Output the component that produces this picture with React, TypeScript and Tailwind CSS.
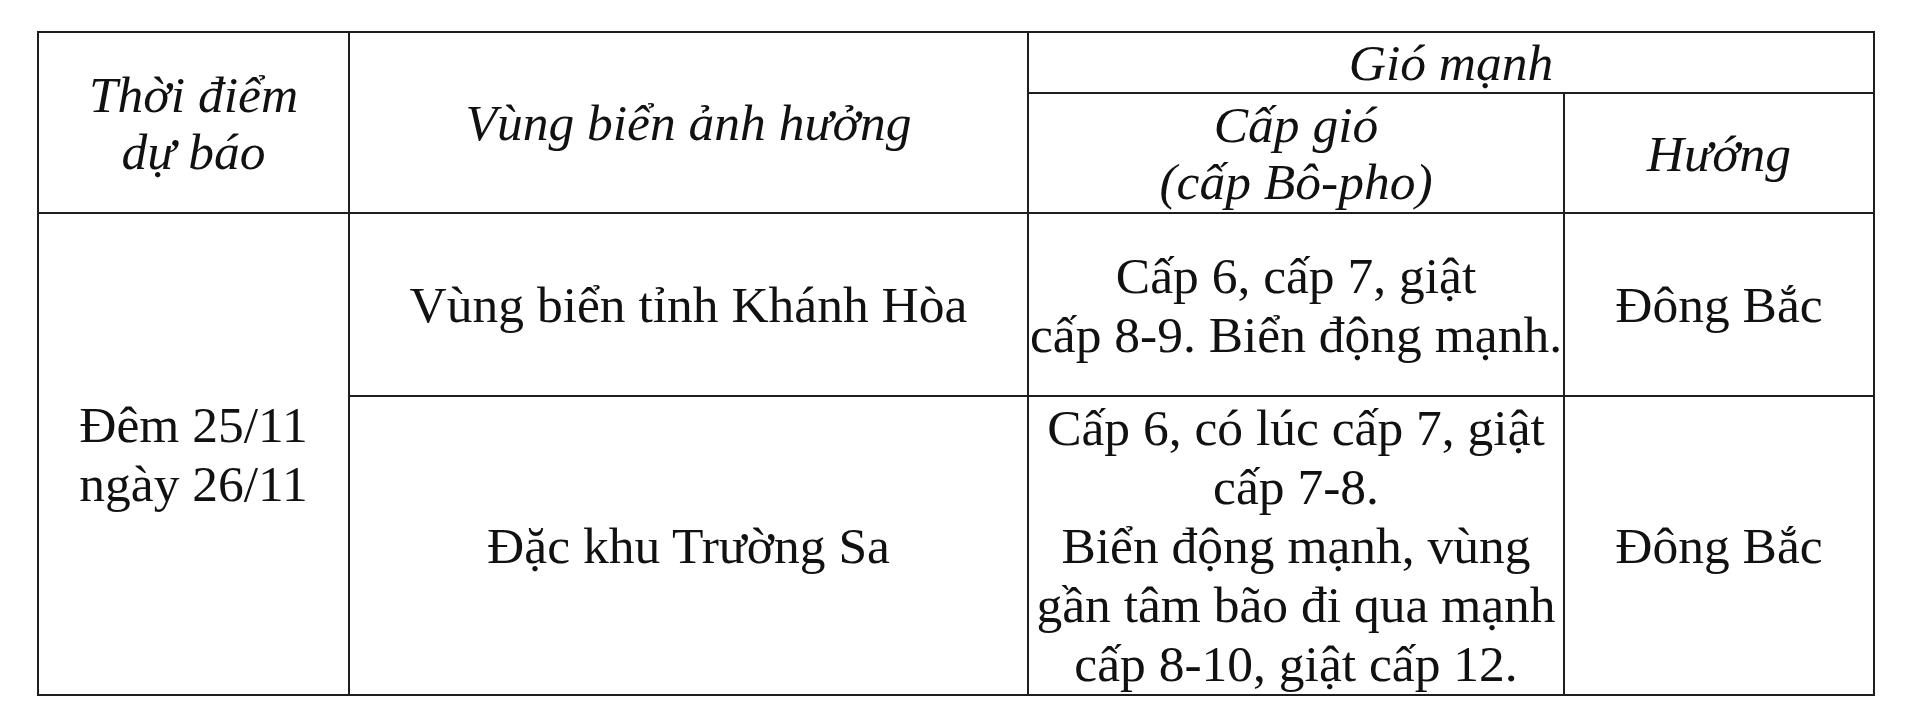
export default function App() {
  const cell =
    "flex items-center justify-center text-center border-r-2 border-b-2 border-[#1e1e1e] overflow-hidden";
  const head = `${cell} italic leading-[57px]`;
  const body = `${cell} leading-[59px]`;

  return (
    <div className="h-[704px] w-[1920px] overflow-hidden bg-white pl-[37px] pt-[31px] font-['Liberation_Serif','Times_New_Roman',serif] text-[51.5px] text-[#111]">
      <div className="grid w-[1838px] grid-cols-[311px_679px_536px_310px] grid-rows-[61px_120px_183px_299px] border-l-2 border-t-2 border-[#1e1e1e]">
        <div className={`${head} row-span-2`}>
          <p>
            Thời điểm
            <br />
            dự báo
          </p>
        </div>
        <div className={`${head} row-span-2`}>
          <p>Vùng biển ảnh hưởng</p>
        </div>
        <div className={`${head} col-span-2`}>
          <p>Gió mạnh</p>
        </div>
        <div className={head}>
          <p className="whitespace-nowrap">
            Cấp gió
            <br />
            (cấp Bô-pho)
          </p>
        </div>
        <div className={head}>
          <p>Hướng</p>
        </div>

        <div className={`${body} row-span-2`}>
          <p>
            Đêm 25/11
            <br />
            ngày 26/11
          </p>
        </div>
        <div className={body}>
          <p>Vùng biển tỉnh Khánh Hòa</p>
        </div>
        <div className={body}>
          <p className="whitespace-nowrap">
            Cấp 6, cấp 7, giật
            <br />
            cấp 8-9. Biển động mạnh.
          </p>
        </div>
        <div className={body}>
          <p>Đông Bắc</p>
        </div>

        <div className={body}>
          <p>Đặc khu Trường Sa</p>
        </div>
        <div className={body}>
          <p className="whitespace-nowrap">
            Cấp 6, có lúc cấp 7, giật
            <br />
            cấp 7-8.
            <br />
            Biển động mạnh, vùng
            <br />
            gần tâm bão đi qua mạnh
            <br />
            cấp 8-10, giật cấp 12.
          </p>
        </div>
        <div className={body}>
          <p>Đông Bắc</p>
        </div>
      </div>

      <div className="ml-[808px] mt-[3px] text-[44px] font-bold leading-none text-[#2d2db4]">
        10n Wind
      </div>
    </div>
  );
}
